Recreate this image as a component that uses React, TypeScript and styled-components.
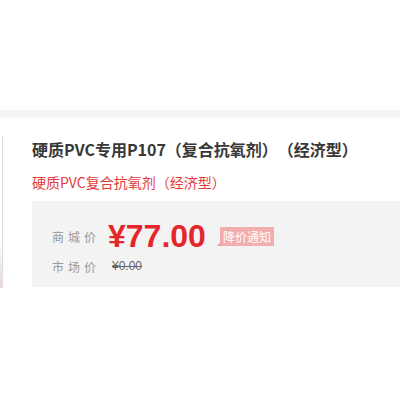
import styled, { createGlobalStyle } from "styled-components";

const GlobalStyle = createGlobalStyle`
  html, body {
    margin: 0;
    padding: 0;
    background: #fff;
  }
  body {
    font-family: "Microsoft YaHei", "Noto Sans CJK SC", sans-serif;
    text-spacing-trim: space-all;
  }
`;

const Page = styled.div`
  width: 400px;
  height: 400px;
  overflow: hidden;
  background: #fff;
`;

const TopSpace = styled.div`
  height: 110px;
`;

const Strip = styled.div`
  height: 7px;
  background: #f4f4f4;
  border-bottom: 1px solid #f8f8f8;
`;

const Row = styled.div`
  display: flex;
  align-items: flex-start;
  padding-top: 19px;
`;

const Gallery = styled.div`
  flex: none;
  width: 2px;
  height: 151px;
  border-right: 1px solid #dcdcdc;
  background: linear-gradient(180deg, #fff 0%, #fff 70%, #e9d4da 100%);
`;

const Info = styled.div`
  flex: 1;
  margin-left: 29px;
  min-width: 0;
`;

const Title = styled.h1`
  margin: 0;
  font-size: 16px;
  font-weight: 700;
  line-height: 24px;
  color: #383838;
  white-space: nowrap;
`;

const Subtitle = styled.p`
  margin: 11px 0 0;
  font-size: 14px;
  line-height: 20px;
  color: #e4393c;
  white-space: nowrap;
`;

const PriceBox = styled.div`
  margin-top: 9px;
  height: 86px;
  box-sizing: border-box;
  padding: 15px 0 0 20px;
  background: #f3f3f3;
`;

const PriceRow = styled.div<{ $h: number }>`
  display: flex;
  align-items: center;
  height: ${(p) => p.$h}px;
`;

const Label = styled.span`
  flex: none;
  width: 56px;
  font-size: 12px;
  letter-spacing: 4px;
  color: #999;
`;

const Price = styled.span`
  font-family: "Liberation Sans", Arial, sans-serif;
  font-size: 32px;
  font-weight: 700;
  color: #e4262b;
  line-height: 40px;
`;

const Notice = styled.span`
  position: relative;
  margin-left: 14px;
  padding: 0 3px;
  height: 19px;
  line-height: 19px;
  font-size: 12px;
  color: #fff;
  background: #f2aeae;
  &::before {
    content: "";
    position: absolute;
    left: -3px;
    bottom: 0;
    border-style: solid;
    border-width: 0 0 4px 4px;
    border-color: transparent transparent #eaa0a0 transparent;
  }
`;

const Market = styled.span`
  padding-left: 4px;
  font-family: "Liberation Sans", Arial, sans-serif;
  font-size: 12px;
  color: #666;
  text-decoration: line-through;
`;

export default function App() {
  return (
    <Page>
      <GlobalStyle />
      <TopSpace />
      <Strip />
      <Row>
        <Gallery />
        <Info>
          <Title>硬质PVC专用P107（复合抗氧剂）（经济型）</Title>
          <Subtitle>硬质PVC复合抗氧剂（经济型）</Subtitle>
          <PriceBox>
            <PriceRow $h={40}>
              <Label>商城价</Label>
              <Price>¥77.00</Price>
              <Notice>降价通知</Notice>
            </PriceRow>
            <PriceRow $h={20}>
              <Label>市场价</Label>
              <Market>¥0.00</Market>
            </PriceRow>
          </PriceBox>
        </Info>
      </Row>
    </Page>
  );
}
